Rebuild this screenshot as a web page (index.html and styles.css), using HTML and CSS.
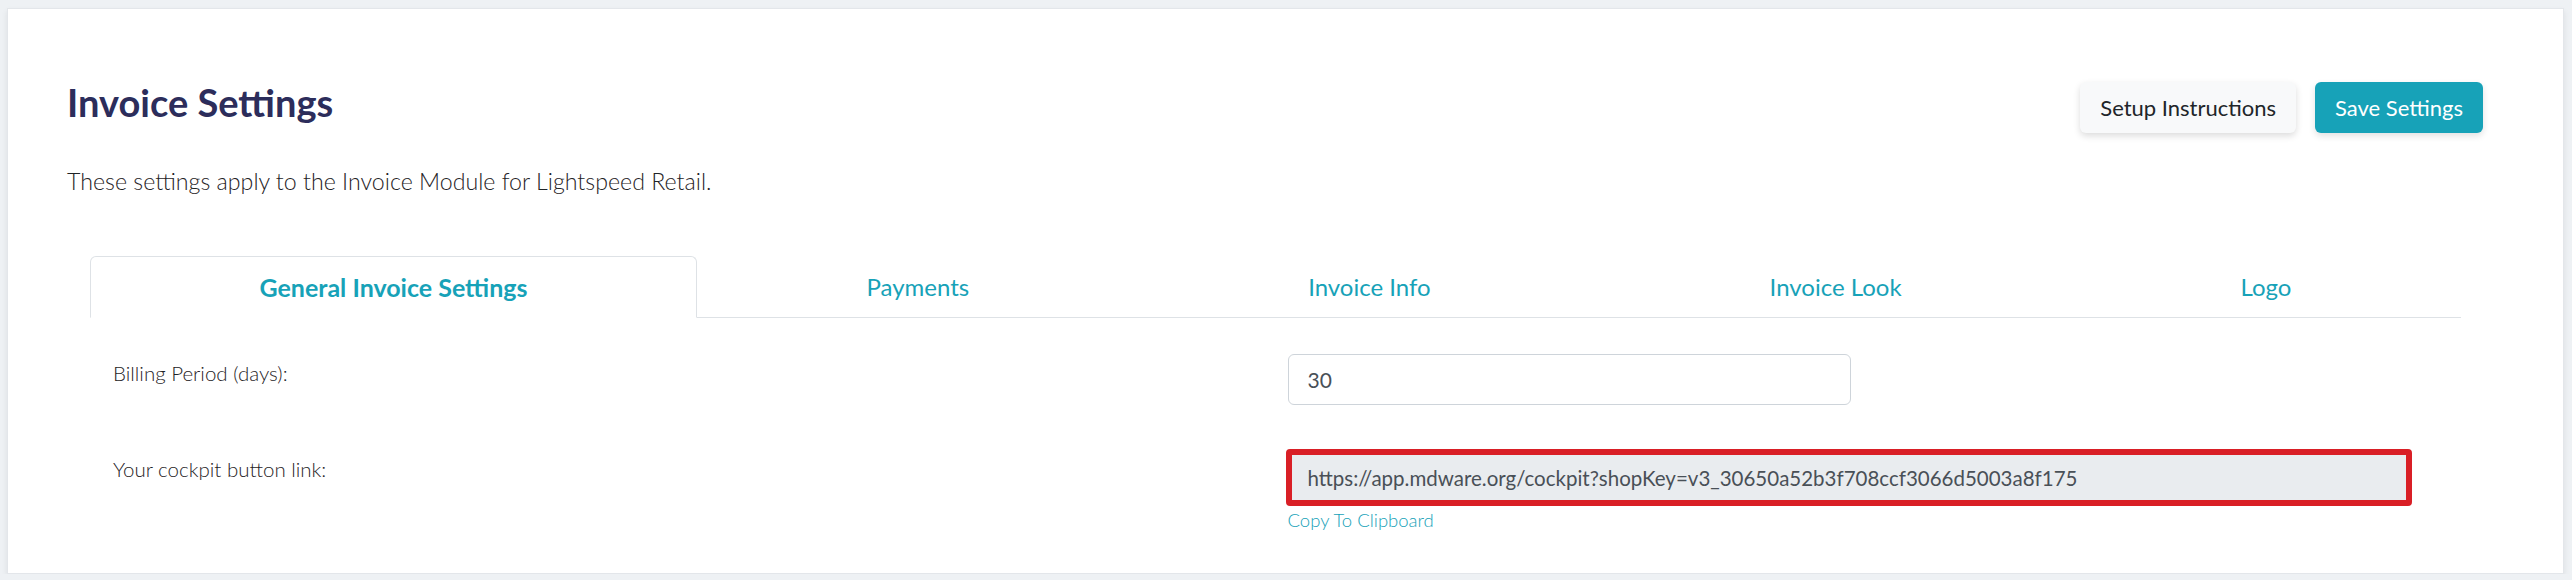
FILE: index.html
```html
<!DOCTYPE html>
<html>
<head>
  <meta charset="UTF-8" />
  <title>Invoice Settings</title>
  <link rel="stylesheet" href="styles.css">
</head>
<body>
  <div class="card">
    <div class="card-head">
      <div>
        <h1>Invoice Settings</h1>
        <p class="lead">These settings apply to the Invoice Module for Lightspeed Retail.</p>
      </div>
      <div class="actions">
        <button class="btn btn-light">Setup Instructions</button>
        <button class="btn btn-info">Save Settings</button>
      </div>
    </div>

    <div class="tabs">
      <ul class="nav-tabs">
        <li class="tab active">General Invoice Settings</li>
        <li class="tab">Payments</li>
        <li class="tab">Invoice Info</li>
        <li class="tab">Invoice Look</li>
        <li class="tab">Logo</li>
      </ul>

      <div class="tab-content">
        <div class="form-row">
          <label class="form-label" for="billing">Billing Period (days):</label>
          <div class="form-field">
            <input id="billing" class="form-control half" type="text" value="30" />
          </div>
        </div>

        <div class="form-row">
          <label class="form-label" for="cockpit">Your cockpit button link:</label>
          <div class="form-field">
            <input id="cockpit" class="form-control readonly highlight" type="text" readonly value="https://app.mdware.org/cockpit?shopKey=v3_30650a52b3f708ccf3066d5003a8f175" />
            <a class="copy-link" href="#">Copy To Clipboard</a>
          </div>
        </div>
      </div>
    </div>
  </div>
</body>
</html>
```

FILE: styles.css
```css
body {
  margin: 0;
  padding: 8px 8px 0 7px;
  background-color: #eef1f4;
  font-family: Lato, "Open Sans", sans-serif;
  color: #212529;
}

.card {
  box-sizing: border-box;
  height: 566px;
  background: #fff;
  border: 1px solid #e3e6ea;
  box-shadow: 0 3px 6px rgba(0,0,0,0.08);
}

.card-head {
  display: flex;
  justify-content: space-between;
  align-items: flex-start;
  padding: 71px 80px 0 59px;
}

h1 {
  margin: 0;
  font-size: 38px;
  font-weight: 700;
  line-height: 1.2;
  color: #2c2d5b;
}

.lead {
  margin: 38px 0 0;
  font-size: 23.2px;
  font-weight: 300;
  line-height: 1.5;
  color: #1f2326;
}

.actions {
  display: flex;
  gap: 19px;
  margin-top: 2px;
}

.btn {
  height: 51px;
  padding: 0 19px;
  font-family: inherit;
  font-size: 22px;
  border: 1px solid transparent;
  border-radius: 6px;
  cursor: pointer;
}

.btn-light {
  background: #f8f9fa;
  color: #212529;
  box-shadow: 0 3px 7px rgba(0,0,0,0.14);
}

.btn-info {
  background: #17a2b8;
  color: #fff;
  box-shadow: 0 3px 7px rgba(0,0,0,0.12);
}

.tabs {
  margin: 58px 102px 0 82px;
}

.nav-tabs {
  display: flex;
  list-style: none;
  margin: 0;
  padding: 0;
  border-bottom: 1px solid #dee2e6;
}

.tab {
  flex: 1 1 auto;
  text-align: center;
  padding: 12px 16px;
  margin-bottom: -1px;
  font-size: 24px;
  line-height: 36px;
  color: #17a2b8;
  border: 1px solid transparent;
  border-radius: 6px 6px 0 0;
  cursor: pointer;
}

.tab.active {
  font-size: 25px;
  font-weight: 700;
  background: #fff;
  border-color: #dee2e6 #dee2e6 #fff;
}

.tab-content {
  padding: 36px 47px 0 23px;
}

.form-row {
  display: grid;
  grid-template-columns: 1fr 1fr;
}

.form-row + .form-row {
  margin-top: 44px;
}

.form-label {
  padding-top: 4px;
  font-size: 20.5px;
  font-weight: 300;
  line-height: 1.5;
  color: #1f2326;
}

.form-row + .form-row .form-label {
  padding-top: 5px;
}

.form-field {
  padding-left: 24px;
}

.form-control {
  display: block;
  box-sizing: border-box;
  width: 100%;
  height: 51px;
  padding: 0 19px;
  font-family: inherit;
  font-size: 21px;
  color: #495057;
  background: #fff;
  border: 1px solid #ced4da;
  border-radius: 6px;
}

.half {
  width: 50%;
}

.readonly {
  background: #e9ecef;
}

.highlight {
  height: 57px;
  margin-left: -2px;
  padding-left: 16px;
  font-size: 20.5px;
  border: 6px solid #d91f26;
  border-radius: 4px;
}

.copy-link {
  display: block;
  margin-top: 1px;
  font-size: 18.5px;
  font-weight: 300;
  line-height: 1.5;
  color: #17a2b8;
  text-decoration: none;
}
```
